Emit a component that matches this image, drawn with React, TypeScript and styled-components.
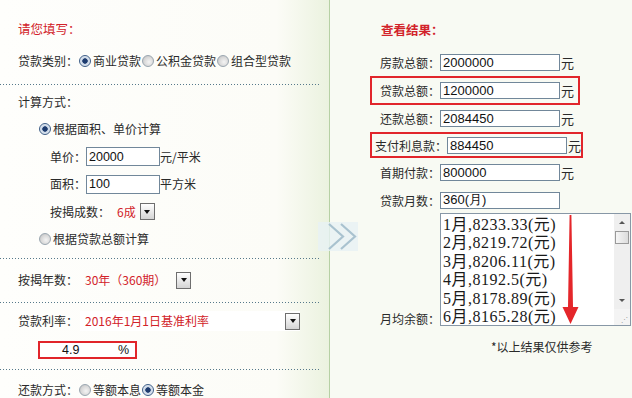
import React from "react";
import styled, { createGlobalStyle } from "styled-components";

const GlobalStyle = createGlobalStyle`
  html, body {
    margin: 0;
    padding: 0;
  }
  body {
    font-family: "Noto Sans CJK SC", "Liberation Sans", sans-serif;
    font-size: 12px;
    color: #2a2a2a;
    background: #fff;
  }
`;

const RED = "#d2232a";

const Page = styled.div`
  position: relative;
  display: flex;
  width: 632px;
  height: 398px;
  overflow: hidden;
`;

/* ---------- left: form ---------- */

const LeftPanel = styled.div`
  width: 329px;
  flex: none;
  border-right: 1px solid #b6d0a4;
  background: linear-gradient(to right, #fefefc 0%, #fcfcf7 84%, #ebf2df 100%);
`;

const Section = styled.div<{ $pt: number; $pb: number }>`
  padding: ${({ $pt }) => $pt}px 0 ${({ $pb }) => $pb}px;
`;

const Separator = styled.div`
  height: 1px;
  margin-right: 10px;
  background: repeating-linear-gradient(to right, #56798a 0 1px, transparent 1px 3px);
`;

const Row = styled.div<{ $h?: number; $indent?: number; $mt?: number }>`
  display: flex;
  align-items: center;
  height: ${({ $h }) => $h ?? 28}px;
  margin-top: ${({ $mt }) => $mt ?? 0}px;
  padding-left: ${({ $indent }) => $indent ?? 18}px;
  white-space: nowrap;
  line-height: 14px;
`;

const FormTitle = styled.div`
  display: flex;
  align-items: center;
  height: 28px;
  padding-left: 18px;
  color: ${RED};
  font-size: 12.5px;
`;

const RedText = styled.span<{ $ml?: number }>`
  color: ${RED};
  margin-left: ${({ $ml }) => $ml ?? 0}px;
`;

const Radio = styled.span<{ $checked?: boolean }>`
  flex: none;
  box-sizing: border-box;
  width: 12px;
  height: 12px;
  margin: 0 2px 0 1px;
  border-radius: 50%;
  border: 1px solid ${({ $checked }) => ($checked ? "#3f5f88" : "#9aa6b0")};
  background: ${({ $checked }) =>
    $checked
      ? "radial-gradient(circle, #1d3b6e 0 2.4px, #c9d6e6 3px, #f6f8fa 100%)"
      : "radial-gradient(circle at 60% 60%, #f4f4f4 0, #d8d8d8 55%, #b8b8b8 100%)"};
`;

const FormInput = styled.input`
  box-sizing: border-box;
  width: 74px;
  height: 19px;
  margin: 0;
  padding: 0 2px;
  border: 1px solid #71879a;
  background: #fff;
  font-family: "Liberation Sans", sans-serif;
  font-size: 12.5px;
  color: #111;
  outline: none;
`;

const DropButton = styled.span<{ $ml?: number }>`
  flex: none;
  display: inline-flex;
  align-items: center;
  justify-content: center;
  box-sizing: border-box;
  width: 15px;
  height: 17px;
  margin-left: ${({ $ml }) => $ml ?? 0}px;
  border: 1px solid #6e6e6e;
  background: linear-gradient(#ffffff, #d4d4d4);
  &::after {
    content: "";
    border-left: 3.5px solid transparent;
    border-right: 3.5px solid transparent;
    border-top: 4px solid #111;
  }
`;

const RateSelect = styled.div`
  display: flex;
  align-items: center;
  justify-content: space-between;
  width: 215px;
  height: 20px;
  padding-left: 5px;
  margin-left: 2px;
  background: #fff;
`;

const RateBox = styled.div`
  display: flex;
  align-items: center;
  box-sizing: border-box;
  width: 99px;
  height: 18px;
  margin: 6px 0 0 38px;
  border: 2px solid #e1252b;
  background: #fff;
  font-family: "Liberation Sans", sans-serif;
  font-size: 12.5px;
  color: #111;
`;

const RateValue = styled.span`
  width: 56px;
  padding-left: 22px;
`;

/* ---------- right: results ---------- */

const RightPanel = styled.div`
  position: relative;
  flex: 1;
  background: #f8faf3;
  padding-top: 15px;
`;

const ResultTitle = styled.div`
  display: flex;
  align-items: center;
  height: 28px;
  padding-left: 51px;
  margin-bottom: 6px;
  color: ${RED};
  font-weight: bold;
  font-size: 12.5px;
`;

const ResultRow = styled.div<{ $h: number; $hl?: boolean; $pl?: number; $w?: number }>`
  display: flex;
  align-items: center;
  box-sizing: border-box;
  height: ${({ $h }) => $h}px;
  width: ${({ $w }) => ($w ? `${$w}px` : "auto")};
  margin-left: 40px;
  padding-left: ${({ $pl }) => $pl ?? 8}px;
  border: 2px solid ${({ $hl }) => ($hl ? "#e1252b" : "transparent")};
  white-space: nowrap;
`;

const ResultLabel = styled.span`
  font-size: 12px;
`;

const ResultInput = styled.input`
  box-sizing: border-box;
  width: 120px;
  height: 17px;
  margin: 0;
  padding: 0 2px;
  border: 1px solid #71879a;
  background: #fff;
  font-family: "Liberation Sans", sans-serif;
  font-size: 13px;
  color: #111;
  outline: none;
`;

const Unit = styled.span`
  margin-left: 1px;
  font-size: 13px;
`;

const ListRow = styled.div`
  display: flex;
  align-items: flex-end;
  margin-left: 50px;
`;

const ListLabel = styled.span`
  line-height: 14px;
`;

const ListBox = styled.div`
  display: flex;
  box-sizing: border-box;
  width: 191px;
  height: 113px;
  border: 1px solid #8797a6;
  background: #fff;
  overflow: hidden;
`;

const ListItems = styled.div`
  flex: 1;
  padding: 2px 0 0 2px;
  font-family: "Liberation Serif", "Noto Sans CJK SC", serif;
  font-size: 16px;
  line-height: 18.4px;
  letter-spacing: 0.5px;
  color: #1a1a1a;
  white-space: nowrap;
`;

const ScrollBar = styled.div`
  display: flex;
  flex-direction: column;
  width: 16px;
  background: #efefef;
`;

const ScrollArrow = styled.div<{ $down?: boolean }>`
  display: flex;
  align-items: center;
  justify-content: center;
  height: 17px;
  &::after {
    content: "";
    border-left: 3px solid transparent;
    border-right: 3px solid transparent;
    ${({ $down }) => ($down ? "border-top: 3px solid #555;" : "border-bottom: 3px solid #555;")}
  }
`;

const ScrollThumb = styled.div`
  height: 13px;
  margin: 0 1px;
  box-sizing: border-box;
  border: 1px solid #9a9a9a;
  background: linear-gradient(to right, #f6f6f6, #dcdcdc);
`;

const ScrollTrack = styled.div`
  flex: 1;
`;

const ScrollCorner = styled.div`
  height: 14px;
  background: #f4f4f4;
  display: flex;
  align-items: flex-end;
  justify-content: flex-end;
  padding: 0 2px 2px 0;
  color: #9a9a9a;
  font-size: 7px;
  line-height: 7px;
`;

const Note = styled.div`
  margin-top: 14px;
  padding-left: 161px;
  line-height: 14px;
  font-size: 12px;
`;

const ArrowOverlay = styled.svg`
  position: absolute;
  left: 230px;
  top: 212px;
`;

const ChevronOverlay = styled.svg`
  position: absolute;
  left: 318px;
  top: 222px;
`;

const monthly = [
  "1月,8233.33(元)",
  "2月,8219.72(元)",
  "3月,8206.11(元)",
  "4月,8192.5(元)",
  "5月,8178.89(元)",
  "6月,8165.28(元)",
];

const results = [
  { label: "房款总额：", value: "2000000", h: 27 },
  { label: "贷款总额：", value: "1200000", h: 29, hl: true, w: 210 },
  { label: "还款总额：", value: "2084450", h: 27 },
  { label: "支付利息款：", value: "884450", h: 26, hl: true, w: 213, pl: 3 },
  { label: "首期付款：", value: "800000", h: 29 },
  { label: "贷款月数：", value: "360(月)", h: 26, noUnit: true },
];

export default function App() {
  return (
    <Page>
      <GlobalStyle />
      <LeftPanel>
        <Section $pt={14} $pb={9}>
          <FormTitle>请您填写：</FormTitle>
          <Row $mt={5}>
            贷款类别：<Radio $checked />商业贷款<Radio />公积金贷款<Radio />组合型贷款
          </Row>
        </Section>
        <Separator />
        <Section $pt={3} $pb={5}>
          <Row $h={27.5}>计算方式：</Row>
          <Row $h={27.5} $indent={38}>
            <Radio $checked />根据面积、单价计算
          </Row>
          <Row $h={27.5} $indent={50}>
            单价：<FormInput readOnly value="20000" />元/平米
          </Row>
          <Row $h={27.5} $indent={50}>
            面积：<FormInput readOnly value="100" />平方米
          </Row>
          <Row $h={27.5} $indent={50}>
            按揭成数：<RedText $ml={7}>6成</RedText>
            <DropButton $ml={4} />
          </Row>
          <Row $h={27.5} $indent={38}>
            <Radio />根据贷款总额计算
          </Row>
        </Section>
        <Separator />
        <Section $pt={7} $pb={8}>
          <Row>
            按揭年数：<RedText $ml={7}>30年（360期）</RedText>
            <DropButton $ml={10} />
          </Row>
        </Section>
        <Separator />
        <Section $pt={4} $pb={10}>
          <Row>
            贷款利率：
            <RateSelect>
              <RedText>2016年1月1日基准利率</RedText>
              <DropButton />
            </RateSelect>
          </Row>
          <RateBox>
            <RateValue>4.9</RateValue>%
          </RateBox>
        </Section>
        <Separator />
        <Section $pt={6} $pb={0}>
          <Row>
            还款方式：<Radio />等额本息<Radio $checked />等额本金
          </Row>
        </Section>
      </LeftPanel>

      <RightPanel>
        <ResultTitle>查看结果：</ResultTitle>
        {results.map((r) => (
          <ResultRow key={r.label} $h={r.h} $hl={r.hl} $w={r.w} $pl={r.pl}>
            <ResultLabel>{r.label}</ResultLabel>
            <ResultInput readOnly value={r.value} />
            {!r.noUnit && <Unit>元</Unit>}
          </ResultRow>
        ))}
        <ListRow>
          <ListLabel>月均余额：</ListLabel>
          <ListBox>
            <ListItems>
              {monthly.map((m) => (
                <div key={m}>{m}</div>
              ))}
            </ListItems>
            <ScrollBar>
              <ScrollArrow />
              <ScrollThumb />
              <ScrollTrack />
              <ScrollArrow $down />
              <ScrollCorner>⋰</ScrollCorner>
            </ScrollBar>
          </ListBox>
        </ListRow>
        <Note>*以上结果仅供参考</Note>
        <ArrowOverlay width="24" height="116" viewBox="0 0 24 116">
          <path d="M9.6 3 L11.4 3 L13 95 L18.5 95 L10.5 112 L2.5 95 L8 95 Z" fill="#e4262a" />
        </ArrowOverlay>
      </RightPanel>

      <ChevronOverlay width="40" height="29" viewBox="0 0 40 29">
        <rect x="0" y="0" width="40" height="29" fill="#e7f1f4" opacity="0.8" />
        <path d="M11 2 L25 14.5 L11 27" fill="none" stroke="#a9c2cf" strokeWidth="2.2" />
        <path d="M23 2 L37 14.5 L23 27" fill="none" stroke="#a9c2cf" strokeWidth="2.2" />
      </ChevronOverlay>
    </Page>
  );
}
